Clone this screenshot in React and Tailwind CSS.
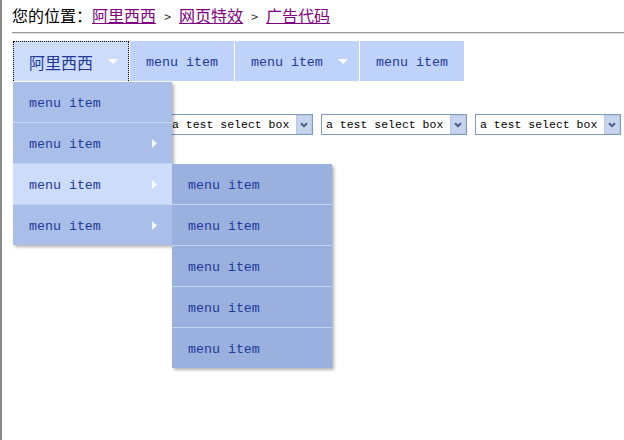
import React from "react";

const cjk = "font-['Noto_Sans_CJK_SC','Noto_Sans',sans-serif]";
const mono = "font-['Liberation_Mono','DejaVu_Sans_Mono',monospace]";
const label = `pt-[4px] text-[13.3px] leading-none text-[#213a98] ${mono}`;

function DownTri() {
  return (
    <svg width="10" height="5" viewBox="0 0 10 5" className="shrink-0">
      <path d="M0 0H10L5 5Z" fill="#ffffff" />
    </svg>
  );
}

function RightTri() {
  return (
    <svg width="5" height="9" viewBox="0 0 5 9" className="shrink-0">
      <path d="M0 0L5 4.5L0 9Z" fill="#ffffff" fillOpacity="0.85" />
    </svg>
  );
}

function Chevron() {
  return (
    <svg width="8" height="6" viewBox="0 0 8 6">
      <path d="M1 1.2L4 4.2L7 1.2" fill="none" stroke="#4a5d88" strokeWidth="2" />
    </svg>
  );
}

function SelectBox() {
  return (
    <div className="flex h-[21px] w-[146px] shrink-0 items-center border border-[#7f9db9] bg-white">
      <span className={`flex-1 pl-[4px] text-[11.5px] leading-none text-black ${mono}`}>
        a test select box
      </span>
      <span className="flex h-[19px] w-[16px] items-center justify-center border border-[#b9c9ea] bg-[#c7d4ee]">
        <Chevron />
      </span>
    </div>
  );
}

function DropItem({ children, arrow, hover, last, sub }) {
  const bg = sub ? "bg-[#9ab0de]" : hover ? "bg-[#cedcfb]" : "bg-[#a9bee8]";
  const border = last ? "h-[40px]" : sub ? "h-[41px] border-b border-[#c6d4f0]" : "h-[41px] border-b border-[#c9d7f3]";
  return (
    <div className={`relative flex items-center justify-between pl-[16px] pr-[15px] ${bg} ${border}`}>
      <span className={label}>menu item</span>
      {arrow && <RightTri />}
      {children}
    </div>
  );
}

export default function App() {
  return (
    <div className="min-h-[440px] w-[624px] overflow-hidden border-l-2 border-[#8a8a8a] bg-white pl-[10px]">
      {/* breadcrumb */}
      <div className={`h-[32px] pt-[5px] text-[16px] leading-[20px] text-black ${cjk}`}>
        <span>您的位置：</span>
        <a className="text-[#800080] underline">阿里西西</a>
        <span className="inline-block w-[23px] text-center text-[13px] text-[#333]">&gt;</span>
        <a className="text-[#800080] underline">网页特效</a>
        <span className="inline-block w-[23px] text-center text-[13px] text-[#333]">&gt;</span>
        <a className="text-[#800080] underline">广告代码</a>
      </div>
      <div className="h-0 border-t border-b border-t-[#9a9a9a] border-b-[#e2e2e2]" />

      {/* menu bar */}
      <div className="relative z-10 ml-px mt-[7px] flex h-[40px] gap-px">
        <div className="flex w-[116px] items-center border border-b-0 border-dotted border-black bg-[#cedcfb] pl-[15px] pr-[10px]">
          <span className={`text-[16px] leading-none text-[#213a98] ${cjk}`}>阿里西西</span>
          <span className="ml-[15px]"><DownTri /></span>
        </div>
        <div className="flex w-[104px] items-center justify-center bg-[#bfd2fa]">
          <span className={label}>menu item</span>
        </div>
        <div className="flex w-[124px] items-center bg-[#bfd2fa] pl-[16px]">
          <span className={label}>menu item</span>
          <span className="ml-[15px]"><DownTri /></span>
        </div>
        <div className="flex w-[104px] items-center justify-center bg-[#bfd2fa]">
          <span className={label}>menu item</span>
        </div>

        {/* open dropdown */}
        <div className="absolute left-0 top-[41px] w-[159px] shadow-[2px_2px_3px_rgba(0,0,0,0.3)]">
          <DropItem />
          <DropItem arrow />
          <DropItem arrow hover>
            <div className="absolute left-full top-0 w-[160px] shadow-[2px_2px_3px_rgba(0,0,0,0.3)]">
              <DropItem sub />
              <DropItem sub />
              <DropItem sub />
              <DropItem sub />
              <DropItem sub last />
            </div>
          </DropItem>
          <DropItem arrow last />
        </div>
      </div>

      {/* select row */}
      <div className="ml-px mt-[33px] flex gap-[8px]">
        <SelectBox />
        <SelectBox />
        <SelectBox />
        <SelectBox />
      </div>
    </div>
  );
}
